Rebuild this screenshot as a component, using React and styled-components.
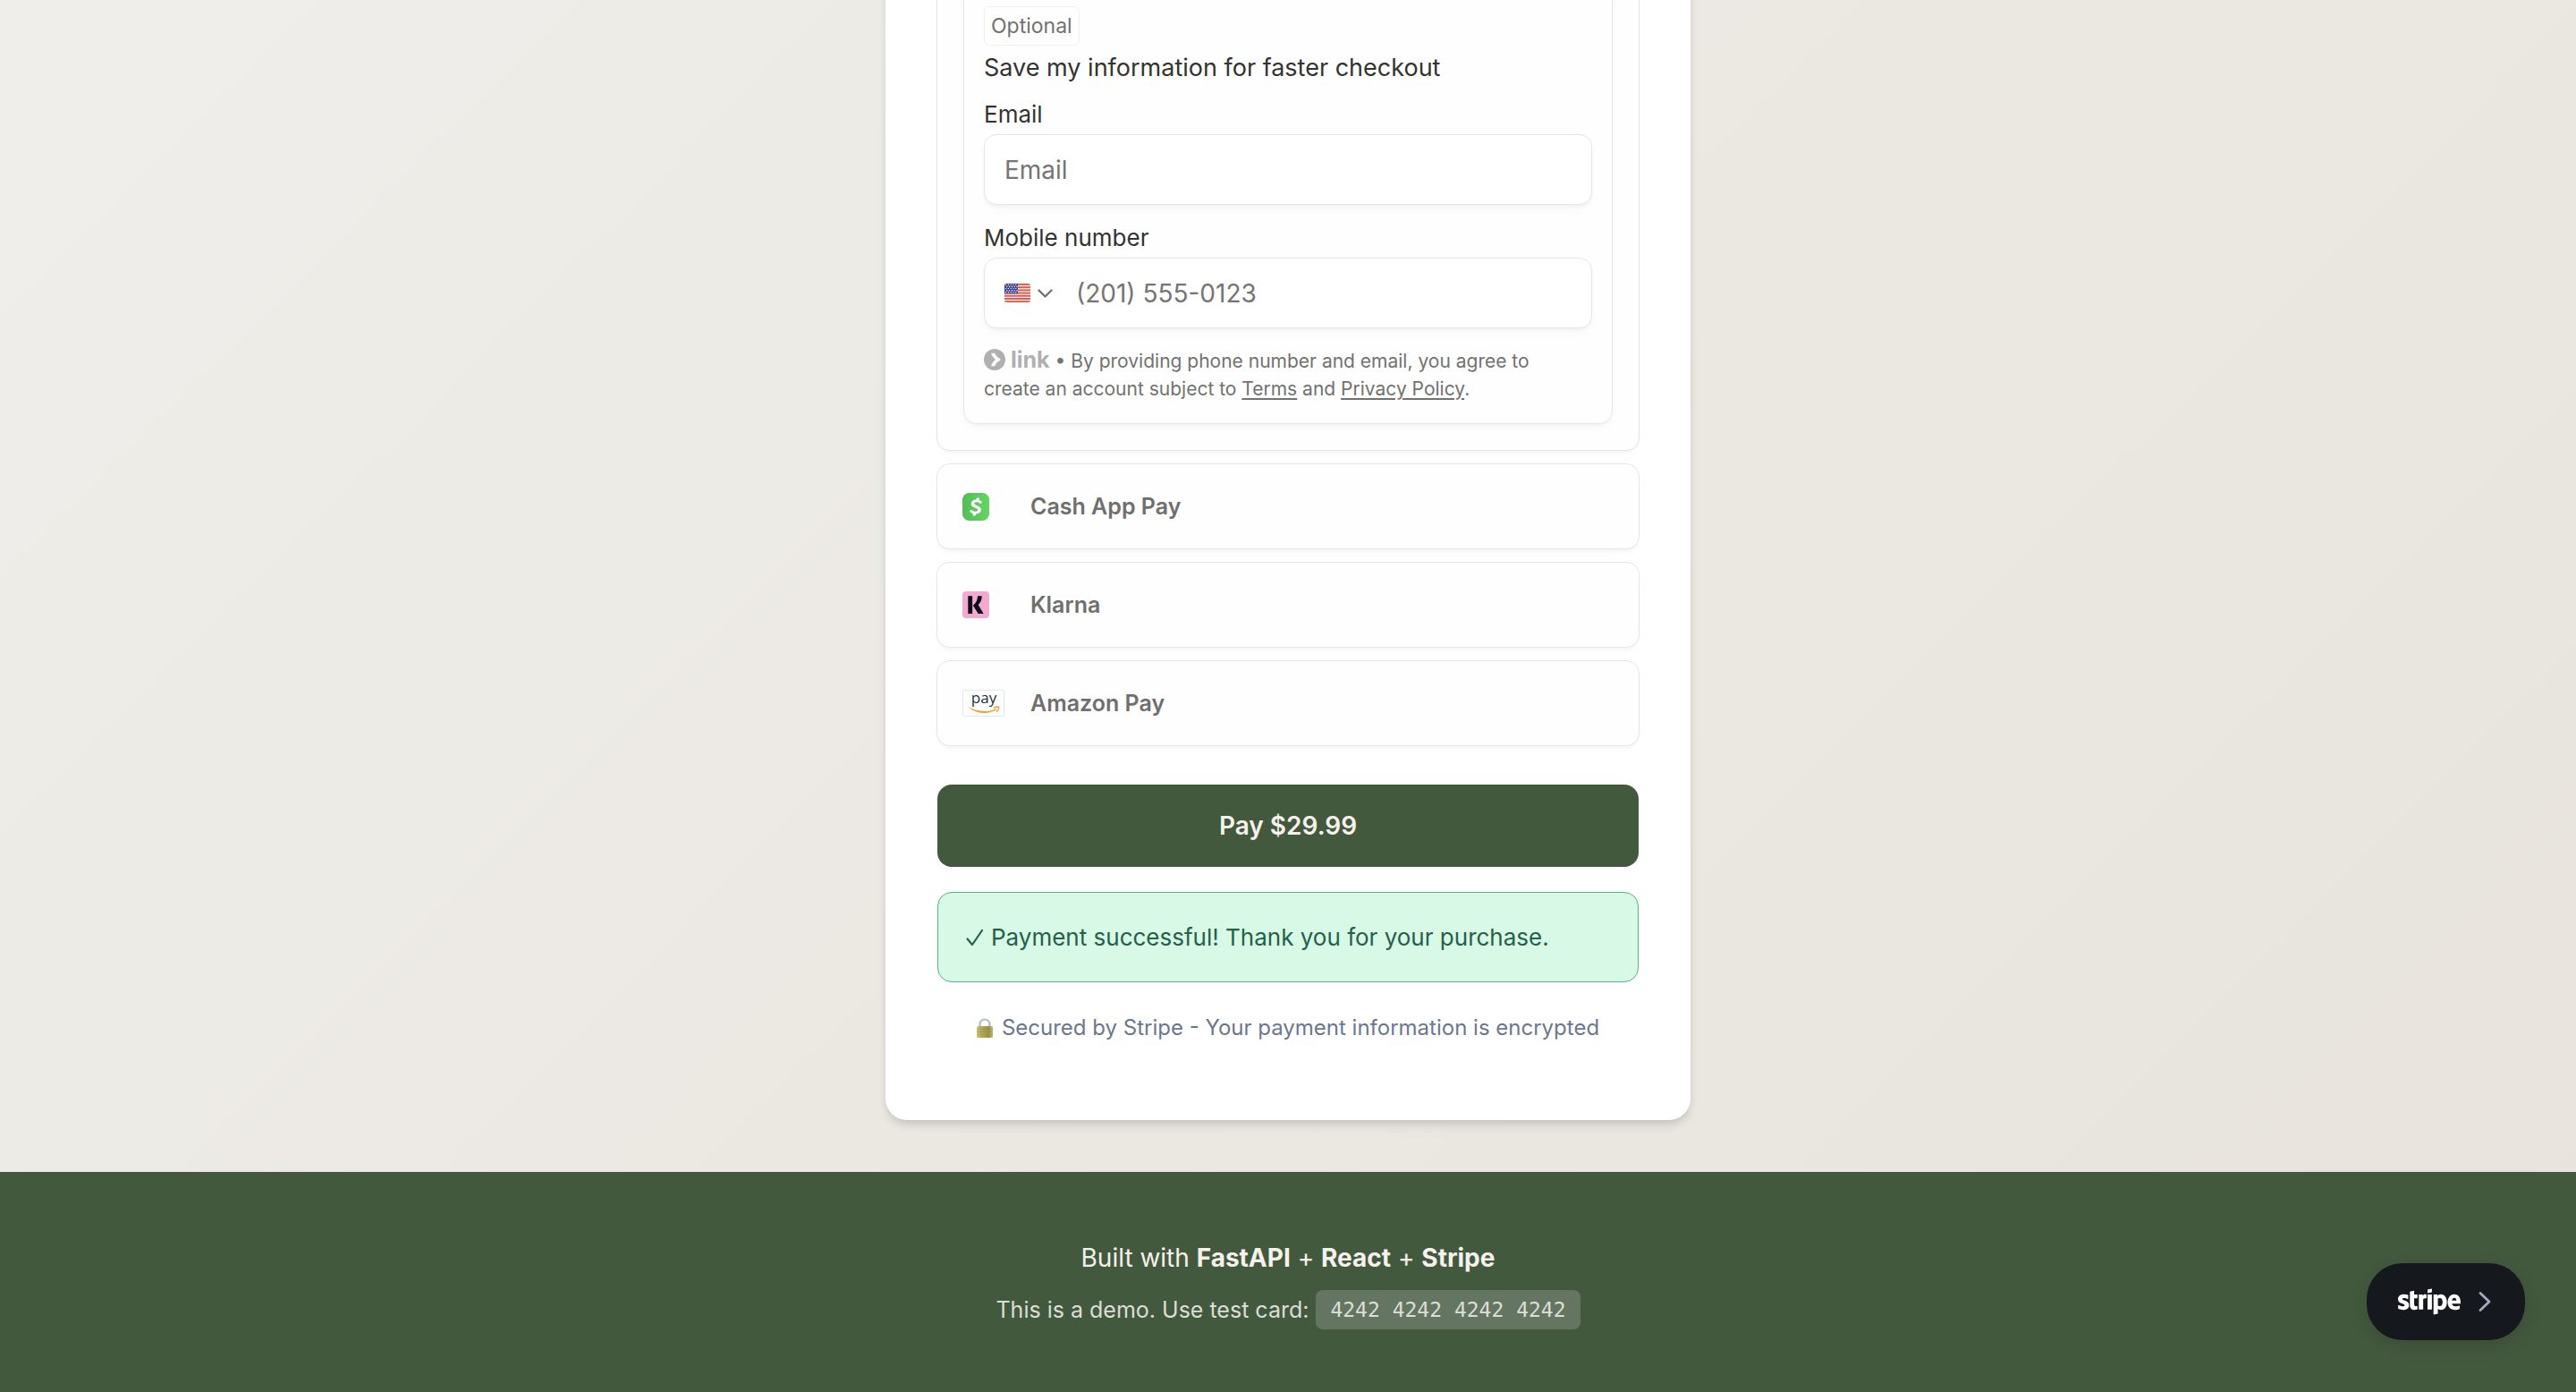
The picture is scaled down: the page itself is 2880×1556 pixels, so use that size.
import React from "react";
import styled, { createGlobalStyle } from "styled-components";
import { FaStripe } from "react-icons/fa";

const sans = `Inter, "Noto Sans", "Liberation Sans", sans-serif`;

const GlobalStyle = createGlobalStyle`
  *, *::before, *::after { box-sizing: border-box; }
  html, body { margin: 0; padding: 0; }
  body { font-family: ${sans}; background: #43593e; -webkit-font-smoothing: antialiased; }
  p { margin: 0; }
`;

const Page = styled.div`
  min-height: 100vh;
  display: flex;
  flex-direction: column;
  overflow: hidden;
`;

const Main = styled.main`
  display: flex;
  justify-content: center;
  padding: 0 32px 58px;
  background: linear-gradient(135deg, #efeeea 0%, #ebe8e2 55%, #e8e4dd 100%);
`;

const Card = styled.form`
  width: 100%;
  max-width: 900px;
  margin-top: -80px;
  padding: 28px 58px 84px;
  border-radius: 24px;
  background: #fff;
  box-shadow: 0 8px 12px -2px rgba(0, 0, 0, 0.1), 0 4px 8px -2px rgba(0, 0, 0, 0.08);
`;

const Methods = styled.div`
  display: flex;
  flex-direction: column;
  gap: 16px;
`;

const surface = `
  background: #fefefe;
  border-radius: 14px;
  box-shadow: 0 0 0 1px #e6e6e6, 0 3px 3px rgba(0, 0, 0, 0.03), 0 6px 12px rgba(0, 0, 0, 0.02);
`;

const Panel = styled.section`
  ${surface}
  padding: 30px;
`;

const SavePanel = styled.section`
  ${surface}
  display: flex;
  flex-direction: column;
  align-items: stretch;
  padding: 29px 22px 23px;
`;

const Badge = styled.span`
  align-self: flex-start;
  padding: 0 7px;
  border: 1px solid #efefef;
  border-radius: 6px;
  font-size: 23px;
  line-height: 42px;
  color: #727270;
`;

const SaveTitle = styled.p`
  margin-top: 6px;
  font-size: 27px;
  line-height: 38px;
  color: #333330;
`;

const FieldLabel = styled.label`
  display: block;
  margin-top: 17px;
  font-size: 26px;
  line-height: 32px;
  color: #333330;
`;

const Field = styled.div`
  display: flex;
  align-items: center;
  height: 79px;
  margin: 6px 0 4px;
  padding: 0 22px;
  border: 1px solid #e6e6e6;
  border-radius: 14px;
  background: #fff;
  box-shadow: 0 3px 3px rgba(0, 0, 0, 0.03), 0 6px 12px rgba(0, 0, 0, 0.02);
`;

const Input = styled.input`
  flex: 1;
  min-width: 0;
  padding: 0;
  border: 0;
  outline: 0;
  background: transparent;
  font-family: ${sans};
  font-size: 28px;
  line-height: 36px;
  color: #333330;
  &::placeholder { color: #757573; opacity: 1; }
`;

const Country = styled.div`
  position: relative;
  display: flex;
  align-items: center;
  gap: 8px;
  margin-right: 26px;
`;

const CountrySelect = styled.select`
  position: absolute;
  inset: 0;
  width: 100%;
  opacity: 0;
`;

const Legal = styled.p`
  margin-top: 17px;
  padding-right: 40px;
  font-size: 21px;
  line-height: 31px;
  color: #727270;
`;

const LinkBrand = styled.span`
  display: inline-flex;
  align-items: center;
  gap: 6px;
  height: 24px;
  vertical-align: -3px;
  font-size: 25px;
  font-weight: 700;
  line-height: 24px;
  color: #b0b0b0;
`;

const LegalLink = styled.a`
  color: inherit;
  text-decoration: underline;
  text-decoration-thickness: 2px;
  text-underline-offset: 3px;
`;

const Method = styled.button`
  ${surface}
  display: flex;
  align-items: center;
  gap: 28px;
  height: 94px;
  padding: 0 28px;
  border: 0;
  font-family: ${sans};
  font-size: 25px;
  font-weight: 600;
  line-height: 32px;
  color: #6f6f6d;
  text-align: left;
`;

const MethodIcon = styled.span`
  display: flex;
  width: 48px;
`;

const PayButton = styled.button`
  display: block;
  width: 100%;
  height: 92px;
  margin-top: 44px;
  border: 0;
  border-radius: 16px;
  background: #43593e;
  color: #f5f1ec;
  font-family: ${sans};
  font-size: 28px;
  font-weight: 600;
`;

const Notice = styled.div`
  display: flex;
  align-items: center;
  gap: 8px;
  height: 101px;
  margin-top: 28px;
  padding: 0 31px;
  border: 1px solid #52b585;
  border-radius: 16px;
  background: #d8f9e6;
  color: #24604a;
  font-size: 26px;
  line-height: 40px;
`;

const Secured = styled.p`
  display: flex;
  align-items: center;
  justify-content: center;
  gap: 10px;
  margin-top: 32px;
  font-size: 24px;
  line-height: 38px;
  color: #6b7790;
`;

const Footer = styled.footer`
  flex: 1;
  padding: 76px 32px 70px;
  background: #43593e;
  color: #f5f1ec;
  text-align: center;
`;

const FooterLine = styled.p`
  font-size: 28px;
  line-height: 40px;
`;

const FooterNote = styled.p`
  display: flex;
  justify-content: center;
  gap: 8px;
  margin-top: 16px;
  font-size: 25px;
  line-height: 44px;
  color: #dcddd6;
`;

const CardNumber = styled.code`
  padding: 0 16px;
  border-radius: 8px;
  background: #647662;
  font-family: "DejaVu Sans Mono", "Liberation Mono", monospace;
  font-size: 23px;
  line-height: 44px;
`;

const StripeBadge = styled.button`
  position: fixed;
  right: 57px;
  bottom: 58px;
  display: flex;
  align-items: center;
  gap: 20px;
  height: 86px;
  padding: 0 38px 0 35px;
  border: 0;
  border-radius: 40px;
  background: #15181d;
  color: #fff;
  box-shadow: 0 6px 20px rgba(0, 0, 0, 0.14);
`;

function FlagIcon() {
  const stars = [];
  for (let r = 0; r < 5; r++)
    for (let c = 0; c < 5; c++)
      stars.push(<circle key={`${r}-${c}`} cx={1.6 + c * 2.8 + (r % 2) * 1.2} cy={1.4 + r * 2.1} r="0.7" fill="#fff" />);
  return (
    <svg width="29" height="21" viewBox="0 0 29 21" aria-hidden="true">
      <clipPath id="flag"><rect width="29" height="21" rx="2.5" /></clipPath>
      <g clipPath="url(#flag)">
        <rect width="29" height="21" fill="#f8efec" />
        {[0, 1, 2, 3, 4, 5, 6].map((i) => (
          <rect key={i} y={i * 3.2} width="29" height="1.9" fill="#dc5a50" />
        ))}
        <rect width="15" height="11.3" fill="#3f4192" />
        {stars}
      </g>
    </svg>
  );
}

function ChevronDown() {
  return (
    <svg width="17" height="12" viewBox="0 0 17 12" fill="none" stroke="#727270" strokeWidth="2.4" strokeLinecap="round" strokeLinejoin="round" aria-hidden="true">
      <path d="M1.5 2.5 8.5 9.5 15.5 2.5" />
    </svg>
  );
}

function LinkMark() {
  return (
    <svg width="24" height="24" viewBox="0 0 24 24" aria-hidden="true">
      <circle cx="12" cy="12" r="12" fill="#b0b0b0" />
      <path d="M12.3 4.8H8.1c.8 3 2.7 5.5 5 7.2-2.3 1.7-4.2 4.2-5 7.2h4.2c1-2.9 3.1-5.3 6-6.1v-2.2c-2.9-.8-5-3.2-6-6.1Z" fill="#fefefe" />
    </svg>
  );
}

function CashAppIcon() {
  return (
    <svg width="30" height="31" viewBox="0 0 24 24.8" aria-hidden="true">
      <linearGradient id="cash" x1="0" x2="1"><stop offset="0" stopColor="#54bd57" /><stop offset="1" stopColor="#65d364" /></linearGradient>
      <rect width="24" height="24.8" rx="6" fill="url(#cash)" />
      <path transform="translate(0 .4)" fill="#fff" d="M17.42 8.105l-.93.93a.5.5 0 01-.67.01 5 5 0 00-3.22-1.18c-.97 0-1.94.32-1.94 1.21 0 .9 1.04 1.2 2.24 1.65 2.1.7 3.84 1.58 3.84 3.64 0 2.24-1.74 3.78-4.58 3.95l-.26 1.2a.49.49 0 01-.48.39H9.63l-.09-.01a.5.5 0 01-.38-.59l.28-1.27a6.54 6.54 0 01-2.88-1.57v-.01a.48.48 0 010-.68l1-.97a.49.49 0 01.67 0c.91.86 2.13 1.34 3.39 1.32 1.3 0 2.17-.55 2.17-1.42 0-.87-.88-1.1-2.54-1.72-1.76-.63-3.43-1.52-3.43-3.6 0-2.42 2.01-3.6 4.39-3.71l.25-1.23a.48.48 0 01.48-.38h1.78l.1.01c.26.06.43.31.37.57l-.27 1.37c.9.3 1.75.77 2.48 1.39l.02.02c.19.2.19.5 0 .68z" />
    </svg>
  );
}

function KlarnaIcon() {
  return (
    <svg width="30" height="30" viewBox="0 0 30 30" aria-hidden="true">
      <rect width="30" height="30" rx="4" fill="#f2abce" />
      <rect x="6.3" y="5.2" width="4.8" height="19.8" fill="#0b051d" />
      <path d="M17 5.2h4.8c0 4-1.5 7.200-4.100 9.700L23.600 25h-5.900l-5.900-9.300C15.200 13.200 17 9.600 17 5.200Z" fill="#0b051d" />
    </svg>
  );
}

function AmazonPayIcon() {
  return (
    <svg width="47" height="30" viewBox="0 0 47 30" overflow="visible" aria-hidden="true">
      <rect x=".5" y=".5" width="46" height="29" rx="1.5" fill="#fff" stroke="#e6e6e6" />
      <text x="24" y="15" textAnchor="middle" fontFamily="Open Sans, Noto Sans, sans-serif" fontSize="17" fontWeight="500" fill="#222e3e">pay</text>
      <path d="M6 18.800C16 24.800 28 25.400 37.500 21.400L38.200 22.600C28 28 15 27.400 6 18.800Z" fill="#f79c34" />
      <path d="M35.300 20.300C37.300 18.900 39.600 18.900 40.600 19.200 40.800 20.800 40.100 23 38.700 24.300" fill="none" stroke="#f79c34" strokeWidth="1.500" strokeLinecap="round" />
    </svg>
  );
}

function CheckIcon() {
  return (
    <svg width="20" height="20" viewBox="0 0 20 20" fill="none" stroke="#24604a" strokeWidth="2.2" strokeLinecap="round" strokeLinejoin="round" aria-hidden="true">
      <path d="M1.5 11.5 7 18 18 2" />
    </svg>
  );
}

function LockIcon() {
  return (
    <svg width="18" height="23" viewBox="0 0 18 23" aria-hidden="true">
      <linearGradient id="lock" x1="0" x2="1">
        <stop offset="0" stopColor="#cfc67c" /><stop offset=".25" stopColor="#b5ab5d" /><stop offset=".75" stopColor="#99904b" /><stop offset="1" stopColor="#c9bd73" />
      </linearGradient>
      <path d="M3.5 11V6.5a5.5 5 0 0 1 11 0V11" fill="none" stroke="#b3bac6" strokeWidth="2.2" />
      <rect y="9" width="18" height="13" rx="1.5" fill="url(#lock)" />
      <path d="M0 12.500h18M0 15.500h18M0 18.500h18" stroke="#8e8545" strokeWidth=".6" opacity=".6" />
    </svg>
  );
}

function ChevronRight() {
  return (
    <svg width="14" height="24" viewBox="0 0 14 24" fill="none" stroke="#a3abc0" strokeWidth="2.8" strokeLinecap="round" strokeLinejoin="round" aria-hidden="true">
      <path d="M2 2.500 12 12 2 21.500" />
    </svg>
  );
}

const methods = [
  { name: "Cash App Pay", Icon: CashAppIcon },
  { name: "Klarna", Icon: KlarnaIcon },
  { name: "Amazon Pay", Icon: AmazonPayIcon },
];

export default function App() {
  return (
    <Page>
      <GlobalStyle />
      <Main>
        <Card onSubmit={(e) => e.preventDefault()}>
          <Methods>
            <Panel>
              <SavePanel>
                <Badge>Optional</Badge>
                <SaveTitle>Save my information for faster checkout</SaveTitle>
                <FieldLabel htmlFor="email">Email</FieldLabel>
                <Field>
                  <Input id="email" type="email" placeholder="Email" />
                </Field>
                <FieldLabel htmlFor="phone">Mobile number</FieldLabel>
                <Field>
                  <Country>
                    <FlagIcon />
                    <ChevronDown />
                    <CountrySelect aria-label="Country" defaultValue="US">
                      <option value="US" aria-label="US" />
                    </CountrySelect>
                  </Country>
                  <Input id="phone" type="tel" placeholder="(201) 555-0123" />
                </Field>
                <Legal>
                  <LinkBrand><LinkMark />link</LinkBrand>
                  {" • By providing phone number and email, you agree to create an account subject to "}
                  <LegalLink href="#terms">Terms</LegalLink> and <LegalLink href="#privacy">Privacy Policy</LegalLink>.
                </Legal>
              </SavePanel>
            </Panel>
            {methods.map(({ name, Icon }) => (
              <Method key={name} type="button">
                <MethodIcon><Icon /></MethodIcon>
                {name}
              </Method>
            ))}
          </Methods>
          <PayButton type="submit">Pay $29.99</PayButton>
          <Notice role="status">
            <CheckIcon />
            Payment successful! Thank you for your purchase.
          </Notice>
          <Secured>
            <LockIcon />
            Secured by Stripe - Your payment information is encrypted
          </Secured>
        </Card>
      </Main>
      <Footer>
        <FooterLine>
          Built with <strong>FastAPI</strong> + <strong>React</strong> + <strong>Stripe</strong>
        </FooterLine>
        <FooterNote>
          This is a demo. Use test card: <CardNumber>4242 4242 4242 4242</CardNumber>
        </FooterNote>
      </Footer>
      <StripeBadge type="button" aria-label="Stripe">
        <FaStripe size={70} />
        <ChevronRight />
      </StripeBadge>
    </Page>
  );
}
